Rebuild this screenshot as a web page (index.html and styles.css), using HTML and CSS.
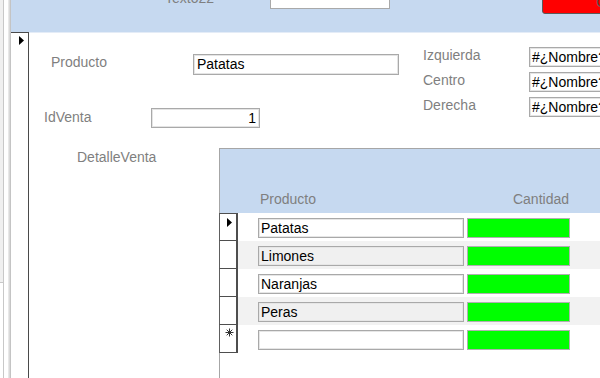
FILE: index.html
```html
<!DOCTYPE html>
<html lang="es">
<head>
    <meta charset="UTF-8">
    <meta name="viewport" content="width=device-width, initial-scale=1.0">
    <title>Ventas</title>
    <link rel="stylesheet" href="styles.css">
</head>
<body>
    <div class="window">
        <div class="nav-strip">
            <div class="nav-edge"></div>
        </div>
        <div class="form">
            <div class="form-header">
                <span class="hdr-label">Texto22</span>
                <div class="hdr-box"></div>
                <div class="hdr-button"><span>C</span></div>
            </div>
            <div class="form-body">
                <div class="selector">
                    <svg width="5" height="9" viewBox="0 0 5 9"><polygon points="0,0 5,4.5 0,9" fill="#000"/></svg>
                </div>
                <div class="detail">
                    <div class="main-fields">
                        <div class="left-fields">
                            <div class="field producto">
                                <span class="label">Producto</span>
                                <div class="box">Patatas</div>
                            </div>
                            <div class="field idventa">
                                <span class="label">IdVenta</span>
                                <div class="box num">1</div>
                            </div>
                        </div>
                        <div class="right-fields">
                            <div class="field">
                                <span class="label">Izquierda</span>
                                <div class="box">#¿Nombre?</div>
                            </div>
                            <div class="field">
                                <span class="label">Centro</span>
                                <div class="box">#¿Nombre?</div>
                            </div>
                            <div class="field">
                                <span class="label">Derecha</span>
                                <div class="box">#¿Nombre?</div>
                            </div>
                        </div>
                    </div>

                    <div class="detalle">
                        <span class="label detalle-label">DetalleVenta</span>
                        <div class="subform">
                            <div class="sub-header">
                                <span class="col-producto">Producto</span>
                                <span class="col-cantidad">Cantidad</span>
                            </div>
                            <div class="sub-body">
                                <div class="row">
                                    <div class="rs first">
                                        <svg width="5" height="9" viewBox="0 0 5 9"><polygon points="0,0 5,4.5 0,9" fill="#000"/></svg>
                                    </div>
                                    <div class="row-cells">
                                        <div class="cell">Patatas</div>
                                        <div class="qty"></div>
                                    </div>
                                </div>
                                <div class="row alt">
                                    <div class="rs"></div>
                                    <div class="row-cells">
                                        <div class="cell">Limones</div>
                                        <div class="qty"></div>
                                    </div>
                                </div>
                                <div class="row">
                                    <div class="rs"></div>
                                    <div class="row-cells">
                                        <div class="cell">Naranjas</div>
                                        <div class="qty"></div>
                                    </div>
                                </div>
                                <div class="row alt">
                                    <div class="rs"></div>
                                    <div class="row-cells">
                                        <div class="cell">Peras</div>
                                        <div class="qty"></div>
                                    </div>
                                </div>
                                <div class="row">
                                    <div class="rs new">
                                        <svg width="9" height="9" viewBox="0 0 9 9">
                                            <path d="M4.5 0.5V8.5M0.5 4.5H8.5M1.7 1.7L7.3 7.3M7.3 1.7L1.7 7.3" stroke="#333" stroke-width="1" fill="none"/>
                                        </svg>
                                    </div>
                                    <div class="row-cells">
                                        <div class="cell"></div>
                                        <div class="qty"></div>
                                    </div>
                                </div>
                            </div>
                        </div>
                    </div>
                </div>
            </div>
        </div>
    </div>
</body>
</html>
```

FILE: styles.css
```css
html, body {
    margin: 0;
    padding: 0;
    background: #fff;
}
body {
    font-family: "Liberation Sans", Arial, sans-serif;
    font-size: 14px;
    line-height: 16px;
    color: #000;
}
.window {
    display: flex;
    width: 600px;
    height: 378px;
    overflow: hidden;
}
.nav-strip {
    width: 11px;
    flex: none;
    box-sizing: border-box;
    border-right: 1px solid #c4c4c4;
    box-shadow: inset -1px 0 0 #d9d9d9, inset -2px 0 0 #e8e8e8;
}
.nav-edge {
    width: 3px;
    height: 100%;
    border-right: 1px solid #c8c8c8;
    background: linear-gradient(#f0f0f0 282px, #c8c8c8 282px, #c8c8c8 283px, #fff 283px);
}
.form {
    flex: 1;
    display: flex;
    flex-direction: column;
    min-width: 0;
}
.form-header {
    height: 32px;
    flex: none;
    background: #c6d9f0;
    display: flex;
    align-items: flex-start;
    overflow: hidden;
}
.form-header > * {
    flex: none;
}
.hdr-label {
    width: 105px;
    margin-left: 154px;
    margin-top: -10px;
    color: #7f7f7f;
}
.hdr-box {
    width: 120px;
    height: 20px;
    margin-top: -11px;
    box-sizing: border-box;
    background: #fff;
    border: 1px solid #a9a9a9;
}
.hdr-button {
    width: 80px;
    height: 26px;
    margin-left: 152px;
    margin-top: -12px;
    box-sizing: border-box;
    background: #ff0000;
    border: 1px solid #5a5a5a;
    border-radius: 3px;
    padding: 5px 0 0 53px;
    color: #555;
}
.form-body {
    flex: 1;
    display: flex;
    min-height: 0;
}
.selector {
    width: 18px;
    flex: none;
    box-sizing: border-box;
    border-top: 1px solid #4a4a4a;
    border-right: 1px solid #4a4a4a;
    padding: 3px 0 0 8px;
}
.selector svg {
    display: block;
}
.detail {
    flex: 1;
    min-width: 0;
    box-shadow: inset 0 1px 0 #e4ecf7;
}
.label {
    color: #7f7f7f;
    flex: none;
}
.box {
    box-sizing: border-box;
    height: 20px;
    padding: 0 3px;
    line-height: 18px;
    background: #fff;
    border: 1px solid #a9a9a9;
    box-shadow: inset 0 0 0 1px #e4e4e4;
    white-space: nowrap;
    overflow: hidden;
    flex: none;
}
.main-fields {
    display: flex;
}
.left-fields {
    width: 370px;
    flex: none;
}
.field {
    display: flex;
    align-items: flex-start;
}
.producto {
    margin-top: 22px;
    padding-left: 22px;
}
.producto .label {
    width: 142px;
}
.producto .box {
    width: 206px;
    height: 21px;
    line-height: 19px;
}
.idventa {
    margin-top: 33px;
    padding-left: 15px;
}
.idventa .label {
    width: 107px;
    margin-top: 1px;
}
.idventa .box {
    width: 109px;
}
.box.num {
    text-align: right;
}
.right-fields {
    margin-left: 24px;
    margin-top: 15px;
    display: flex;
    flex-direction: column;
    gap: 5px;
    flex: none;
}
.right-fields .label {
    width: 106px;
}
.right-fields .box {
    width: 80px;
    padding-left: 2px;
}
.detalle {
    display: flex;
    align-items: flex-start;
    margin-top: 20px;
}
.detalle-label {
    width: 142px;
    padding-left: 48px;
    padding-top: 1px;
}
.subform {
    flex: 1;
    min-width: 0;
    height: 240px;
    display: flex;
    flex-direction: column;
    border-top: 1px solid #a6a6a6;
}
.sub-header {
    height: 64px;
    flex: none;
    box-sizing: border-box;
    background: #c6d9f0;
    border-left: 1px solid #a6a6a6;
    display: flex;
    align-items: flex-end;
    padding: 0 0 6px 40px;
    color: #7f7f7f;
}
.col-producto {
    width: 207px;
    flex: none;
}
.col-cantidad {
    width: 102px;
    flex: none;
    text-align: right;
}
.sub-body {
    flex: 1;
    border-left: 1px solid #a6a6a6;
}
.row {
    display: flex;
    height: 28px;
    margin-left: -1px;
}
.rs {
    width: 19px;
    flex: none;
    box-sizing: border-box;
    border-left: 1px solid #5e5e5e;
    border-right: 2px solid #4e4e4e;
    border-bottom: 1px solid #4e4e4e;
    padding: 4px 0 0 7px;
}
.rs.first {
    border-top: 1px solid #4e4e4e;
}
.rs.new {
    padding: 3px 0 0 5px;
}
.rs svg {
    display: block;
}
.row-cells {
    flex: 1;
    display: flex;
    align-items: flex-start;
    padding: 5px 0 0 20px;
}
.row.alt .row-cells {
    background: #f2f2f2;
}
.cell {
    width: 206px;
    height: 20px;
    flex: none;
    box-sizing: border-box;
    padding: 0 2px;
    line-height: 18px;
    background: #fff;
    border: 1px solid #a9a9a9;
    box-shadow: inset 0 0 0 1px #e6e6e6;
}
.row.alt .cell {
    background: #f0f0f0;
}
.qty {
    width: 103px;
    height: 20px;
    flex: none;
    margin-left: 3px;
    box-sizing: border-box;
    background: #00ff00;
    border: 1px solid #b0b0b0;
}
```
